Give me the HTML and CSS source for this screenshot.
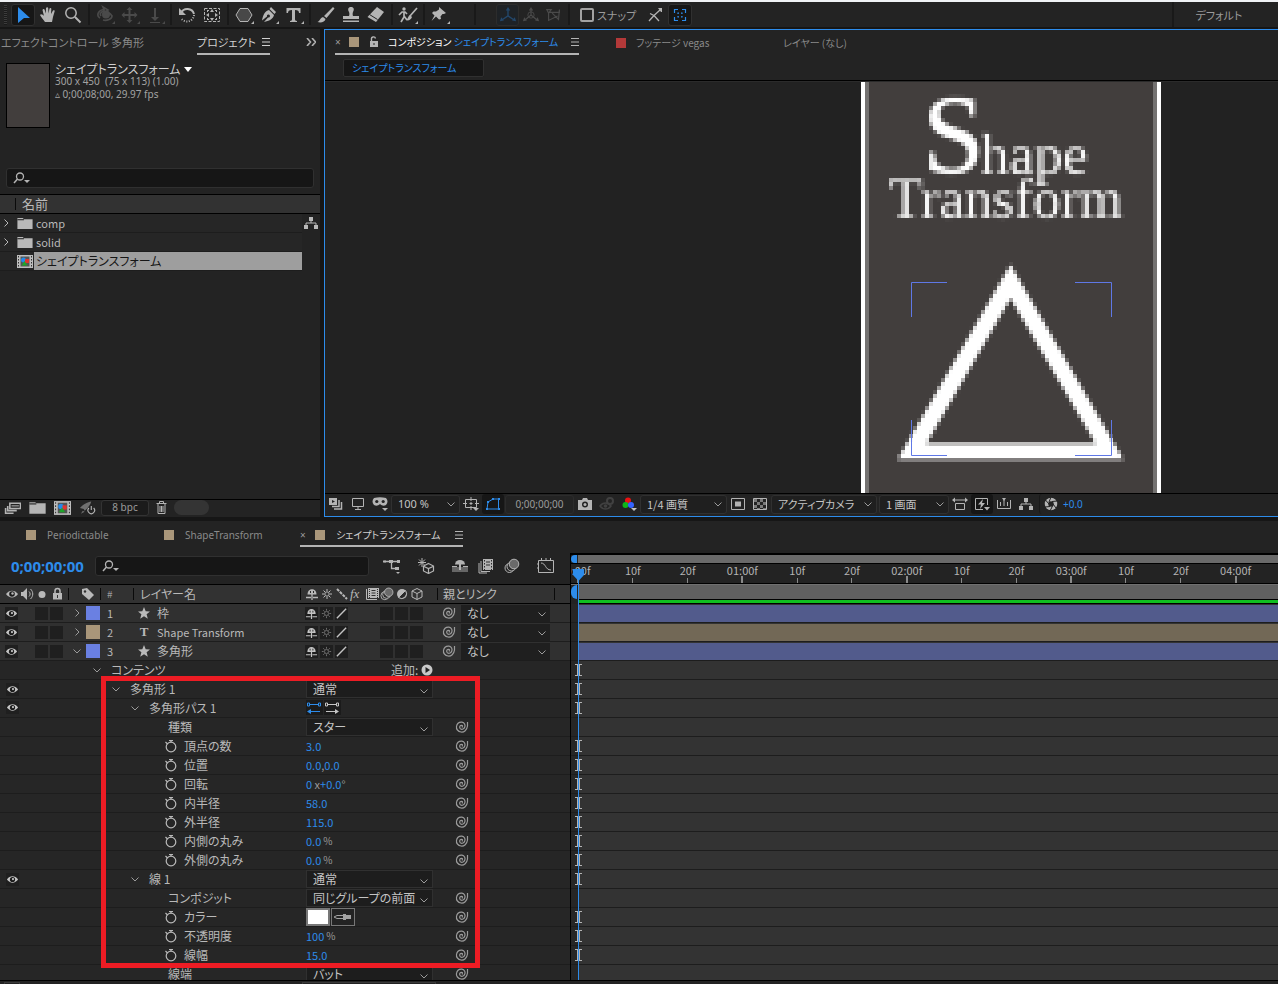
FILE: index.html
```html
<!DOCTYPE html>
<html lang="ja">
<head>
<meta charset="utf-8">
<title>シェイプトランスフォーム</title>
<link rel="stylesheet" href="styles.css">
</head>
<body>
<svg class="defs" aria-hidden="true">
  <symbol id="i-arrow" viewBox="0 0 20 20"><path d="M5 2 17 13 11 13 5 18Z" fill="#2d8ceb"/></symbol>
  <symbol id="i-hand" viewBox="0 0 20 20"><path d="M7 17C5 14 3 12 2 10 3 8.500 5 10 6 11L4.500 5C5 3.500 6.500 4 6.700 5L7.800 8.500 8 3C8.500 2 10 2 10.200 3L10.500 8.500 11.500 3.500C12.300 2.500 13.500 3 13.300 4.200L13 9 15 5.500C16 4.800 17 5.500 16.600 6.500L15 12 14 17Z" fill="currentColor"/></symbol>
  <symbol id="i-zoom" viewBox="0 0 20 20"><circle cx="8" cy="8" r="5.200" fill="none" stroke="currentColor" stroke-width="1.500"/><path d="M12 12 17.500 17.500" stroke="currentColor" stroke-width="2"/></symbol>
  <symbol id="i-orbit" viewBox="0 0 20 20"><path d="M5 13C1 11 3 5 9 4.500L8 2 13 5 9 8 9 6C5.500 7 4.500 9 6 11M8 9C10 6 15 7 17 11 17 14 12 16 8 15" fill="none" stroke="currentColor" stroke-width="1.700"/><circle cx="11" cy="9.500" r="4" fill="currentColor"/><path d="M20 16v3h-3Z" fill="currentColor"/></symbol>
  <symbol id="i-pan" viewBox="0 0 20 20"><path d="M9.500 2 12.500 5H10.500V9H14.500V7L17.500 10 14.500 13V11H10.500V15H12.500L9.500 18 6.500 15H8.500V11H4.500V13L1.500 10 4.500 7V9H8.500V5H6.500ZM20 16v3h-3Z" fill="currentColor"/></symbol>
  <symbol id="i-dolly" viewBox="0 0 20 20"><path d="M9 3h2v9h3l-4 4-4-4h3ZM5 17h10v1H5ZM20 16v3h-3Z" fill="currentColor"/></symbol>
  <symbol id="i-rotate" viewBox="0 0 20 20"><path d="M4 8A7 7 0 0 1 17 9" fill="none" stroke="currentColor" stroke-width="2"/><path d="M17 10A7 7 0 0 1 4 13" fill="none" stroke="currentColor" stroke-width="2" stroke-dasharray="1 1.500"/><path d="M2 3v7h7Z" fill="currentColor"/></symbol>
  <symbol id="i-behind" viewBox="0 0 20 20"><path d="M2.500 3.500h15v13h-15Z" fill="none" stroke="currentColor" stroke-dasharray="3 1.500"/><path d="m10 4 2 3H8Zm0 12 2-3H8ZM4 10l3-2v4Zm12 0-3-2v4ZM5 5h2v1H6v1H5Zm8 0h2v2h-1V6h-1ZM5 13h1v1h1v1H5Zm9 0h1v2h-2v-1h1Z" fill="currentColor"/></symbol>
  <symbol id="i-hex" viewBox="0 0 20 20"><path d="M6 3.500h8L18 10l-4 6.500H6L2 10Z" fill="#484848" stroke="currentColor"/><path d="M20 16v3h-3Z" fill="currentColor"/></symbol>
  <symbol id="i-pen" viewBox="0 0 20 20"><path d="M12 2 17 7 15.500 9 10.500 4ZM10 5 15 10C14 14 10 16 5 17L9 12.500A1.500 1.500 0 1 0 8 11.500L3 15.500C4 10 6 6 10 5ZM20 16v3h-3Z" fill="currentColor"/></symbol>
  <symbol id="i-type" viewBox="0 0 20 20"><path d="M2.500 3H16.500V8H15C15 6 14 5 11 5V14C11 15.500 11.500 15.800 13 16V17H6V16C7.500 15.800 8 15.500 8 14V5C5 5 4 6 4 8H2.500ZM20 16v3h-3Z" fill="currentColor"/></symbol>
  <symbol id="i-brush" viewBox="0 0 20 20"><path d="M17 2 18.500 3.500 10.500 13 8 11ZM7 12 9.500 14C9 17 5 18 1.500 17 4 16 4 13 7 12Z" fill="currentColor"/></symbol>
  <symbol id="i-stamp" viewBox="0 0 20 20"><path d="M10 2C13 2 13.500 4.500 12 7 11.500 8.500 11.500 9.500 12 11H18V14H2V11H8C8.500 9.500 8.500 8.500 8 7 6.500 4.500 7 2 10 2ZM2 15.500H18V17H2Z" fill="currentColor"/></symbol>
  <symbol id="i-eraser" viewBox="0 0 20 20"><path d="M11 2 18 7 10 17 1.500 12Z" fill="currentColor"/><path d="m3.500 9.500 8 5" stroke="#232323"/></symbol>
  <symbol id="i-roto" viewBox="0 0 20 20"><circle cx="6" cy="4" r="1.700" fill="currentColor"/><path d="M1 10 4 7H7L9 9M6 7V12L3 17M6 11 9 15M19 3 12 11" fill="none" stroke="currentColor" stroke-width="1.700"/><path d="M12 10 14 12C13 15 10 16 8 15 10 14 10 11 12 10ZM20 16v3h-3Z" fill="currentColor"/></symbol>
  <symbol id="i-pin" viewBox="0 0 20 20"><path d="M9 2 16 8 14 9 12.500 9 10.500 11.500 11 14 9 14.500 6 11.500 1.500 16 4.500 10.500 2 8 3.500 6.500H6L9 4.500ZM20 16v3h-3Z" fill="currentColor"/></symbol>
  <symbol id="i-axis" viewBox="0 0 20 20"><path d="M10 4V11L4 15M10 11 16 15" fill="none" stroke="currentColor" stroke-width="1.500"/><path d="M10 1 12.500 5h-5ZM1 17l1.500-4.500 3 3.500Zm18 0-1.500-4.500-3 3.500Z" fill="currentColor"/></symbol>
  <symbol id="i-axisw" viewBox="0 0 20 20"><circle cx="10" cy="10" r="3.500" fill="none" stroke="currentColor"/><path d="M10 4V10L4 15M10 10 16 15" fill="none" stroke="currentColor" stroke-width="1.300"/><path d="M10 1 12.500 5h-5ZM1 17l1.500-4.500 3 3.500Zm18 0-1.500-4.500-3 3.500Z" fill="currentColor"/></symbol>
  <symbol id="i-plane" viewBox="0 0 20 20"><path d="M4 7H16V4M4 7 4 16 14 11M16 4 15 15 8 8M2 4h5L4 8Z" fill="none" stroke="currentColor" stroke-width="1.300"/></symbol>
  <symbol id="i-snapline" viewBox="0 0 20 20"><path d="M3 16 8 10.500 13 16M4 8.500 8 10.500 14 5" fill="none" stroke="currentColor" stroke-width="1.300"/><path d="M12 3h4v4h-1Z" fill="currentColor"/></symbol>
  <symbol id="i-snapbox" viewBox="0 0 20 20"><path d="M4.500 8V4.500H8M12 4.500H15.500V8M15.500 12V15.500H12M8 15.500H4.500V12M8 9V8H9M11 8h1v1M12 11v1h-1M9 12H8v-1" fill="none" stroke="#2d8ceb" stroke-width="1.200"/></symbol>

  <symbol id="i-chev" viewBox="0 0 8 8"><path d="M.5 2.500 4 6 7.500 2.500" fill="none" stroke="currentColor"/></symbol>
  <symbol id="i-chevr" viewBox="0 0 8 8"><path d="M2.500.5 6 4 2.500 7.500" fill="none" stroke="currentColor"/></symbol>
  <symbol id="i-menu" viewBox="0 0 8 8"><path d="M0 .5h8M0 4h8M0 7.500h8" stroke="currentColor"/></symbol>
  <symbol id="i-search" viewBox="0 0 18 12"><circle cx="7" cy="4.500" r="3.500" fill="none" stroke="currentColor" stroke-width="1.300"/><path d="M4.500 7 1 11" stroke="currentColor" stroke-width="1.500"/><path d="M11 8h6l-3 3Z" fill="currentColor"/></symbol>
  <symbol id="i-folder" viewBox="0 0 14 12"><path d="M0 1h5l1 1h8v9H0Z" fill="currentColor"/><path d="M0 2.500h6" stroke="#262626"/></symbol>
  <symbol id="i-comp" viewBox="0 0 16 13"><path d="M0 0h16v13H0Z" fill="#bdbdbd"/><path d="M1.500 1v12M14.500 1v12" stroke="#333" stroke-dasharray="1.500 1.500"/><path d="M3.500 1.500h9v10h-9Z" fill="#555"/><circle cx="6.500" cy="5" r="2.500" fill="#2489e8"/><path d="M8 4h4v4H8Z" fill="#e0342f"/><path d="m7.500 6 3 4.500h-6Z" fill="#1fa52b"/></symbol>
  <symbol id="i-tree" viewBox="0 0 14 12"><path d="M5 0h4v4H5ZM0 8h4v4H0Zm10 0h4v4h-4Z" fill="currentColor"/><path d="M7 4v2M2 8V6h10v2" fill="none" stroke="currentColor"/></symbol>
  <symbol id="i-interp" viewBox="0 0 16 12"><path d="M5.500 1.500h10v5h-10ZM3.500 4v4.500H12M1.500 6v5H9" fill="none" stroke="currentColor" stroke-width="1.500"/><path d="M7 4h7" stroke="currentColor"/></symbol>
  <symbol id="i-rocket" viewBox="0 0 18 14"><path d="M1 7C5 2 9 1 13 0 12 4 9 7 6 10L5 8ZM4 10l-2 3 4-2Z" fill="#6f6f6f"/><path d="M10.500 7a3.500 3.500 0 1 0 5 0M13 5v4" fill="none" stroke="currentColor" stroke-width="1.200"/></symbol>
  <symbol id="i-trash" viewBox="0 0 12 14"><path d="M1 2.500h10M4 2V.5h4V2M2.500 3v9.500h7V3M4.500 5v6M6 5v6M7.500 5v6" fill="none" stroke="currentColor"/></symbol>

  <symbol id="i-preview" viewBox="0 0 16 14"><path d="M1 1h8v7H1Z" fill="currentColor"/><path d="m4 3 3 1.500L4 6Z" fill="#232323"/><path d="M11 3v6.500H4M13.500 5v7H6" fill="none" stroke="currentColor" stroke-width="1.500"/></symbol>
  <symbol id="i-monitor" viewBox="0 0 16 14"><path d="M2.500 1.500h11v8h-11ZM8 10v2M5 12.500h6" fill="none" stroke="currentColor"/></symbol>
  <symbol id="i-mask" viewBox="0 0 16 14"><path d="M2 1C6 0 10 0 14 1 16 3 16 6 14 8 12 9 10 9 8 7 6 9 4 9 2 8 0 6 0 3 2 1Z" fill="currentColor"/><circle cx="4.800" cy="4.500" r="1.600" fill="#232323"/><circle cx="11.200" cy="4.500" r="1.600" fill="#232323"/><path d="M10 11h6l-3 3Z" fill="currentColor"/></symbol>
  <symbol id="i-grid" viewBox="0 0 16 14"><path d="M2.500 2.500h11v8h-11ZM8 0v4M8 9v4M0 6.500h4M12 6.500h4M6.500 6.500h3M8 5v3" fill="none" stroke="currentColor"/><path d="M10 11h6l-3 3Z" fill="currentColor"/></symbol>
  <symbol id="i-shapemask" viewBox="0 0 16 14"><path d="M2 12 3 5 8 2H13.500V12Z" fill="none" stroke="#2d8ceb"/><path d="M1 11h2v2H1ZM2 4h2v2H2Zm5-3h2v2H7Zm6 0h2v2h-2Zm0 10h2v2h-2Z" fill="#2d8ceb"/></symbol>
  <symbol id="i-camera" viewBox="0 0 16 14"><path d="M1 3h4l1-2h4l1 2h4v10H1Z" fill="currentColor"/><circle cx="8" cy="7.500" r="3" fill="#232323"/><circle cx="8" cy="7.500" r="1.500" fill="currentColor"/></symbol>
  <symbol id="i-showsnap" viewBox="0 0 16 14"><circle cx="11" cy="4" r="3" fill="none" stroke="#414141" stroke-width="2"/><path d="M1 9C4 5 9 5 12 9 9 13 4 13 1 9Z" fill="none" stroke="#414141" stroke-width="1.500"/><circle cx="6.500" cy="9" r="1.800" fill="#414141"/></symbol>
  <symbol id="i-rgb" viewBox="0 0 16 14"><circle cx="7" cy="3.500" r="3" fill="#e11"/><circle cx="4.500" cy="8" r="3" fill="#0fb51a"/><circle cx="10" cy="8" r="3" fill="#3563ff"/><path d="M10 11h6l-3 3Z" fill="#c4c4c4"/></symbol>
  <symbol id="i-roi" viewBox="0 0 16 14"><path d="M1.500 1.500h13v11h-13Z" fill="none" stroke="currentColor"/><path d="M5 4.500h6v5H5Z" fill="currentColor"/></symbol>
  <symbol id="i-checker" viewBox="0 0 16 14"><path d="M1.500 1.500h13v11h-13Z" fill="none" stroke="currentColor"/><path d="M2 2h3v3H2Zm6 0h3v3H8ZM5 5h3v3H5Zm6 0h3v3h-3ZM2 8h3v3H2Zm6 0h3v3H8ZM5 11h3v1.500H5Zm6 0h3v1.500h-3Z" fill="currentColor" opacity=".6"/></symbol>
  <symbol id="i-par" viewBox="0 0 16 14"><path d="M1 3h14M3.500 6.500h9v6h-9Z" fill="none" stroke="currentColor"/><path d="m0 3 3-2.500v5ZM16 3l-3-2.500v5Z" fill="currentColor"/></symbol>
  <symbol id="i-fast" viewBox="0 0 16 14"><path d="M13.500 8V1.500H1.500v11H9" fill="none" stroke="currentColor"/><path d="M9 2 4 7.500h3L6 12l5-6H8ZM10 10h6l-3 3.500Z" fill="currentColor"/></symbol>
  <symbol id="i-tlbtn" viewBox="0 0 16 14"><path d="M1.500 3v8.500h13V3M4.500 5v4M8 3v6M11.500 5v4" fill="none" stroke="currentColor"/><path d="M6 1h4L8 4Z" fill="currentColor"/></symbol>
  <symbol id="i-aperture" viewBox="0 0 16 14"><circle cx="8" cy="7" r="4.500" fill="none" stroke="currentColor" stroke-width="3.500"/><path d="M8 0 6 5M14 4 9 4.500M13 11 10 7M7 14 9.500 9M2 10 7 9.500M2.500 3 6 7" stroke="#232323"/></symbol>

  <symbol id="i-flow" viewBox="0 0 18 16"><path d="M1 3.500h6M7 3.500h9M8.500 3.500v7H13" fill="none" stroke="currentColor" stroke-width="1.300"/><path d="M0 2.500h3v2H0ZM6 2h4v3H6Zm8 0h3v3h-3Zm-2 7h4v3h-4Zm1 5h4l-2 2Z" fill="currentColor"/></symbol>
  <symbol id="i-draft" viewBox="0 0 18 16"><path d="M5 0v9M1 4.500h8M2 1.500l6 6M8 1.500l-6 6" stroke="currentColor"/><path d="m11.500 5.500 5 2.500v5l-5 2.500-5-2.500V8ZM7 8.500l4.500 2 4.500-2M11.500 10.500v4.500" fill="#232323" stroke="currentColor" stroke-width="1.200"/></symbol>
  <symbol id="i-shybig" viewBox="0 0 18 16"><path d="M1 9h16v5H1Z" fill="#666"/><path d="M9 2a5 4.500 0 0 1 5 4.500H4A5 4.500 0 0 1 9 2Z" fill="currentColor"/><path d="M8 6h2v6H8ZM1 8h5v1H1Zm11 0h5v1h-5Z" fill="currentColor"/></symbol>
  <symbol id="i-frames" viewBox="0 0 18 16"><path d="M6 1h10v11H6Z" fill="currentColor"/><path d="M7.500 2v10M14.500 2v10" stroke="#2a2a2a" stroke-dasharray="1.500 1.500"/><path d="M9 4h4M9 7h4" stroke="#2a2a2a"/><path d="M4 3v10.500h9M2 5v10h8" fill="none" stroke="currentColor"/></symbol>
  <symbol id="i-blur" viewBox="0 0 18 16"><circle cx="6.500" cy="10" r="4.500" fill="none" stroke="currentColor"/><circle cx="8.500" cy="8.500" r="4.500" fill="#2b2b2b" stroke="currentColor"/><circle cx="11" cy="6" r="4.800" fill="#6a6a6a" stroke="currentColor"/></symbol>
  <symbol id="i-graph" viewBox="0 0 18 16"><path d="M1.500 2.500h15v12h-15ZM4.500 0v2M9 0v2M13.500 0v2M0 6h2M0 10h2M4 5C9 5 8 12 14 12" fill="none" stroke="currentColor"/></symbol>

  <symbol id="i-eye" viewBox="0 0 14 14"><path d="M1 7C4 2.500 10 2.500 13 7 10 11.500 4 11.500 1 7Z" fill="currentColor"/><circle cx="7" cy="7" r="2.800" fill="#1b1b1b"/><circle cx="7.500" cy="6.500" r="1.200" fill="currentColor"/></symbol>
  <symbol id="i-speaker" viewBox="0 0 14 14"><path d="M1 5h2l4-4v12L3 9H1Z" fill="currentColor"/><path d="M9 4.500c1.500 1.500 1.500 3.500 0 5M10.500 2c3 3 3 7 0 10" fill="none" stroke="currentColor"/></symbol>
  <symbol id="i-dot" viewBox="0 0 14 14"><circle cx="7" cy="7.500" r="3.500" fill="currentColor"/></symbol>
  <symbol id="i-lock" viewBox="0 0 14 14"><path d="M3 6h9v6.500H3Z" fill="currentColor"/><path d="M5 6V4a2.500 2.500 0 0 1 5 0v2" fill="none" stroke="currentColor" stroke-width="1.500"/><path d="M7 8h1v3H7Z" fill="#333"/></symbol>
  <symbol id="i-tag" viewBox="0 0 14 14"><path d="M1 2 6 1 13 8 8 13 1 7Z" fill="currentColor"/><circle cx="4" cy="4.500" r="1.200" fill="#333"/></symbol>
  <symbol id="i-shy" viewBox="0 0 14 14"><path d="M2.500 7.500C2.500 .5 11.500 .5 11.500 7.500Z" fill="currentColor"/><path d="M7 6v7M1 10.500h5M8 10.500h5" stroke="currentColor" stroke-width="1.300"/><path d="M5.500 4v2M8.500 4v2" stroke="#2a2a2a"/></symbol>
  <symbol id="i-sun" viewBox="0 0 14 14"><circle cx="7" cy="7" r="2.200" fill="none" stroke="currentColor"/><path d="M7 2v2M7 10v2M2 7h2M10 7h2M3.500 3.500 5 5M9 9l1.500 1.500M10.500 3.500 9 5M5 9l-1.500 1.500" stroke="currentColor"/></symbol>
  <symbol id="i-quality" viewBox="0 0 14 14"><path d="m2 2 10 10" stroke="currentColor" stroke-width="2" stroke-dasharray="3 1"/></symbol>
  <symbol id="i-slash" viewBox="0 0 14 14"><path d="M2 12 12 2" stroke="currentColor" stroke-width="1.500"/></symbol>
  <symbol id="i-film" viewBox="0 0 14 14"><path d="M3 1h11v10H3Z" fill="currentColor"/><path d="M6.500 3.500h4M6.500 6h4M6.500 8.500h4" stroke="#333"/><path d="M4.500 2v9M12.500 2v9" stroke="#333" stroke-dasharray="1 1"/><path d="M1.500 2v10.500H12" fill="none" stroke="currentColor"/></symbol>
  <symbol id="i-adj" viewBox="0 0 14 14"><circle cx="7" cy="7" r="5" fill="currentColor"/><path d="M10.500 3.500A5 5 0 0 1 3.500 10.500Z" fill="#2a2a2a" stroke="currentColor"/></symbol>
  <symbol id="i-cube" viewBox="0 0 14 14"><path d="m7 1.500 5 2.500v6l-5 2.500-5-2.500V4ZM2 4l5 2.500L12 4M7 6.500v6" fill="none" stroke="currentColor"/></symbol>
  <symbol id="i-star" viewBox="0 0 14 14"><path d="m7 1 1.700 4.200 4.300.3-3.400 2.800 1.200 4.500L7 10.200l-3.800 2.600 1.200-4.500L1 5.500l4.300-.3Z" fill="currentColor"/></symbol>
  <symbol id="i-whip" viewBox="0 0 14 14"><path d="M12.500 2V6C12 10 9 12.500 6 12 3 11.500 1 9 1.500 6.500 2 3.500 4.500 2 7 2.200 9.500 2.500 10.500 5 9.800 7 9 9.500 6 10 5 8.300 4 6.500 5.500 4.700 7.300 5.500V7.500" fill="none" stroke="currentColor" stroke-width="1.200"/></symbol>
  <symbol id="i-watch" viewBox="0 0 14 14"><circle cx="7" cy="8" r="4.800" fill="none" stroke="currentColor" stroke-width="1.200"/><path d="M5 1.500h4M7 1v2.500M1.500 3l2 2" stroke="currentColor" stroke-width="1.200"/></symbol>
  <symbol id="i-play" viewBox="0 0 12 12"><circle cx="6" cy="6" r="5.500" fill="#c8c8c8"/><path d="m4.500 3 4.500 3-4.500 3Z" fill="#222"/></symbol>
  <symbol id="i-dirl" viewBox="0 0 16 14"><path d="M2 3.500h12M3 10.500h11" stroke="currentColor"/><path d="M1.500 2h2v3h-2ZM12.500 2h2v3h-2Z" fill="#1b1b1b" stroke="currentColor"/><path d="m1 10.500 4-2.500v5Z" fill="currentColor"/></symbol>
  <symbol id="i-dirr" viewBox="0 0 16 14"><path d="M2 3.500h12M2 10.500h11" stroke="currentColor"/><path d="M1.500 2h2v3h-2ZM12.500 2h2v3h-2Z" fill="#1b1b1b" stroke="currentColor"/><path d="m15 10.500-4-2.500v5Z" fill="currentColor"/></symbol>
  <symbol id="i-dropper" viewBox="0 0 22 12"><path d="M2 6 5 4.500h7v3H5Z" fill="none" stroke="currentColor"/><path d="M11 3h3v1h5v4h-5v1h-3Z" fill="currentColor"/></symbol>
  <symbol id="i-ibeam" viewBox="0 0 8 12"><path d="M0 .5h3M4 .5h3M0 11.500h3M4 11.500h3" stroke="#b4b4b4"/><path d="M2 1h3v10H2Z" fill="#b4b4b4"/></symbol>
  <symbol id="i-head" viewBox="0 0 14 14"><path d="M2 1h11v6l-5.500 6L2 7Z" fill="#2d8ceb"/></symbol>
</svg>

<header class="toolbar">
  <span class="grip"></span>
  <button class="tool on" aria-label="選択"><svg><use href="#i-arrow"/></svg></button>
  <button class="tool" aria-label="手のひら"><svg><use href="#i-hand"/></svg></button>
  <button class="tool" aria-label="ズーム"><svg><use href="#i-zoom"/></svg></button>
  <i class="tsep"></i>
  <button class="tool dim" aria-label="カメラ周回"><svg><use href="#i-orbit"/></svg></button>
  <button class="tool dim" aria-label="カメラ移動"><svg><use href="#i-pan"/></svg></button>
  <button class="tool dim" aria-label="カメラドリー"><svg><use href="#i-dolly"/></svg></button>
  <i class="tsep"></i>
  <button class="tool" aria-label="回転"><svg><use href="#i-rotate"/></svg></button>
  <button class="tool" aria-label="アンカーポイント"><svg><use href="#i-behind"/></svg></button>
  <i class="tsep"></i>
  <button class="tool" aria-label="多角形"><svg><use href="#i-hex"/></svg></button>
  <button class="tool" aria-label="ペン"><svg><use href="#i-pen"/></svg></button>
  <button class="tool" aria-label="文字"><svg><use href="#i-type"/></svg></button>
  <i class="tsep"></i>
  <button class="tool" aria-label="ブラシ"><svg><use href="#i-brush"/></svg></button>
  <button class="tool" aria-label="コピースタンプ"><svg><use href="#i-stamp"/></svg></button>
  <button class="tool" aria-label="消しゴム"><svg><use href="#i-eraser"/></svg></button>
  <i class="tsep"></i>
  <button class="tool" aria-label="ロトブラシ"><svg><use href="#i-roto"/></svg></button>
  <i class="tsep"></i>
  <button class="tool" aria-label="パペットピン"><svg><use href="#i-pin"/></svg></button>
  <i class="tsep wide"></i>
  <button class="tool axis lit" aria-label="ローカル軸"><svg><use href="#i-axis"/></svg></button>
  <button class="tool axis dim" aria-label="ワールド軸"><svg><use href="#i-axisw"/></svg></button>
  <button class="tool axis dim" aria-label="ビュー軸"><svg><use href="#i-plane"/></svg></button>
  <i class="tsep"></i>
  <label class="snap"><input type="checkbox">スナップ</label>
  <button class="tool" aria-label="エッジ"><svg><use href="#i-snapline"/></svg></button>
  <button class="tool on" aria-label="フィーチャ"><svg><use href="#i-snapbox"/></svg></button>
  <button class="workspace">デフォルト</button>
</header>

<main class="upper">
  <section class="project">
    <nav class="tabs">
      <button class="tab effects">エフェクトコントロール 多角形</button>
      <button class="tab current">プロジェクト<svg class="s8"><use href="#i-menu"/></svg></button>
      <button class="more" aria-label="その他"><svg viewBox="0 0 10 8"><path d="M1 0 4.500 4 1 8M6 0l3.500 4L6 8" fill="none" stroke="currentColor" stroke-width="1.600"/></svg></button>
    </nav>
    <div class="info">
      <div class="thumb"></div>
      <div>
        <div class="title">シェイプトランスフォーム <svg viewBox="0 0 8 6"><path d="M0 1h8L4 6Z" fill="#fff"/></svg></div>
        <div class="meta">300 x 450 &nbsp;(75 x 113) (1.00)</div>
        <div class="meta">▵ 0;00;08;00, 29.97 fps</div>
      </div>
    </div>
    <label class="search"><svg><use href="#i-search"/></svg><input type="text" aria-label="プロジェクトを検索"></label>
    <div class="list-head"><i></i>名前</div>
    <div class="list">
      <div class="items">
        <div class="item latin"><svg class="s8"><use href="#i-chevr"/></svg><svg class="fi"><use href="#i-folder"/></svg><span>comp</span></div>
        <div class="item latin"><svg class="s8"><use href="#i-chevr"/></svg><svg class="fi"><use href="#i-folder"/></svg><span>solid</span></div>
        <div class="item sel"><b class="s8"></b><svg class="fi"><use href="#i-comp"/></svg><span>シェイプトランスフォーム</span></div>
      </div>
      <button class="flowbtn" aria-label="フローチャート"><svg><use href="#i-tree"/></svg></button>
    </div>
    <footer class="pfoot">
      <button aria-label="フッテージを変換"><svg><use href="#i-interp"/></svg></button>
      <button aria-label="新規フォルダー"><svg><use href="#i-folder"/></svg></button>
      <button aria-label="新規コンポジション"><svg><use href="#i-comp"/></svg></button>
      <button aria-label="プロジェクト設定"><svg><use href="#i-rocket"/></svg></button>
      <button class="bpc">8 bpc</button>
      <button aria-label="削除"><svg><use href="#i-trash"/></svg></button>
      <span class="pill"></span>
    </footer>
  </section>

  <section class="viewer">
    <nav class="vtabs">
      <div class="vtab current"><span class="x">×</span><i class="sw tan"></i><svg class="lock" viewBox="0 0 10 12"><path d="M1 5h8v6H1Z" fill="currentColor"/><path d="M2.500 5V3.500a2 2 0 0 1 4-1" fill="none" stroke="currentColor" stroke-width="1.400"/><path d="M4.500 7h1v2h-1Z" fill="#232323"/></svg><button>コンポジション <em>シェイプトランスフォーム</em></button><svg class="s8"><use href="#i-menu"/></svg></div>
      <div class="vtab foot"><i class="sw red"></i><button>フッテージ vegas</button></div>
      <div class="vtab layer"><button>レイヤー (なし)</button></div>
    </nav>
    <div class="crumbs"><button>シェイプトランスフォーム</button></div>
    <div class="stage">
      <svg viewBox="0 0 300 411" preserveAspectRatio="xMidYMin slice">
        <defs>
          <filter id="mosaic" filterUnits="userSpaceOnUse" x="0" y="0" width="300" height="412">
            <feGaussianBlur in="SourceGraphic" stdDeviation="1" result="soft"/>
            <feFlood x="2" y="2" width="1" height="1" flood-color="#000" result="dot"/>
            <feOffset in="dot" dx="0" dy="0" x="0" y="0" width="4" height="4" result="cell"/>
            <feTile in="cell" result="dots"/>
            <feComposite in="soft" in2="dots" operator="in" result="a"/>
            <feOffset in="a" dx="1" result="a1"/><feMerge result="b"><feMergeNode in="a"/><feMergeNode in="a1"/></feMerge>
            <feOffset in="b" dx="-2" result="b1"/><feMerge result="c"><feMergeNode in="b"/><feMergeNode in="b1"/></feMerge>
            <feOffset in="c" dy="1" result="c1"/><feMerge result="d"><feMergeNode in="c"/><feMergeNode in="c1"/></feMerge>
            <feOffset in="d" dy="-2" result="d1"/><feMerge><feMergeNode in="d"/><feMergeNode in="d1"/></feMerge>
          </filter>
        </defs>
        <rect width="300" height="411" fill="#fff"/>
        <rect x="4" width="292" height="411" fill="#747271"/>
        <rect x="8" width="284" height="411" fill="#423e3d"/>
        <g filter="url(#mosaic)" fill="#fff" font-family="Liberation Serif, serif">
          <text x="62" y="91" font-size="112" stroke="#fff" stroke-width="1">S</text>
          <text x="120" y="92" font-size="57">hape</text>
          <text x="28" y="136" font-size="56">Transform</text>
          <path fill-rule="evenodd" d="M150 183 263 378H37ZM150 217 66 362H235Z"/>
        </g>
        <path d="M50.500 235V200.500H86M214 200.500H250.500V235M250.500 338V373.500H214M86 373.500H50.500V338" fill="none" stroke="#5f78e6"/>
      </svg>
    </div>
    <footer class="vfoot">
      <button class="vi" aria-label="プレビュー"><svg><use href="#i-preview"/></svg></button>
      <button class="vi" aria-label="モニター"><svg><use href="#i-monitor"/></svg></button>
      <button class="vi" aria-label="VR"><svg><use href="#i-mask"/></svg></button>
      <span class="dd w69 lat"><select aria-label="拡大率"><option>100 %</option></select><svg class="s8"><use href="#i-chev"/></svg></span>
      <button class="vi" aria-label="グリッド"><svg><use href="#i-grid"/></svg></button>
      <button class="vi on" aria-label="マスク表示"><svg><use href="#i-shapemask"/></svg></button>
      <button class="vtime">0;00;00;00</button>
      <button class="vi" aria-label="スナップショット"><svg><use href="#i-camera"/></svg></button>
      <button class="vi" aria-label="スナップショットを表示"><svg><use href="#i-showsnap"/></svg></button>
      <button class="vi" aria-label="チャンネル"><svg><use href="#i-rgb"/></svg></button>
      <span class="dd w87"><select aria-label="解像度"><option>1/4 画質</option></select><svg class="s8"><use href="#i-chev"/></svg></span>
      <button class="vi" aria-label="目標範囲"><svg><use href="#i-roi"/></svg></button>
      <button class="vi" aria-label="透明グリッド"><svg><use href="#i-checker"/></svg></button>
      <span class="dd w106"><select aria-label="3Dビュー"><option>アクティブカメラ</option></select><svg class="s8"><use href="#i-chev"/></svg></span>
      <span class="dd w70"><select aria-label="画面数"><option>1 画面</option></select><svg class="s8"><use href="#i-chev"/></svg></span>
      <button class="vi" aria-label="ピクセル縦横比"><svg><use href="#i-par"/></svg></button>
      <button class="vi on" aria-label="高速プレビュー"><svg><use href="#i-fast"/></svg></button>
      <button class="vi" aria-label="タイムライン"><svg><use href="#i-tlbtn"/></svg></button>
      <button class="vi tree" aria-label="フローチャート"><svg><use href="#i-tree"/></svg></button>
      <button class="vi edge" aria-label="露出をリセット"><svg><use href="#i-aperture"/></svg></button>
      <button class="expo">+0.0</button>
    </footer>
  </section>
</main>

<section class="timeline">
  <nav class="ttabs">
    <div class="ttab t1"><i class="sw tan"></i><button>Periodictable</button></div>
    <div class="ttab t2"><i class="sw tan"></i><button>ShapeTransform</button></div>
    <div class="ttab t3 current"><span class="x">×</span><i class="sw tan"></i><button>シェイプトランスフォーム</button><svg class="s8"><use href="#i-menu"/></svg></div>
  </nav>
  <div class="tbody">
    <div class="left">
      <div class="ttools">
        <button class="now">0;00;00;00</button>
        <label class="search"><svg><use href="#i-search"/></svg><input type="text" aria-label="レイヤーを検索"></label>
        <button class="ti g1" aria-label="ミニフローチャート"><svg><use href="#i-flow"/></svg></button>
        <button class="ti g2" aria-label="ドラフト3D"><svg><use href="#i-draft"/></svg></button>
        <button class="ti g2" aria-label="シャイ"><svg><use href="#i-shybig"/></svg></button>
        <button class="ti g3" aria-label="フレームブレンド"><svg><use href="#i-frames"/></svg></button>
        <button class="ti g3" aria-label="モーションブラー"><svg><use href="#i-blur"/></svg></button>
        <button class="ti g2" aria-label="グラフエディター"><svg><use href="#i-graph"/></svg></button>
      </div>
      <div class="cols">
        <span class="c-av"><svg><use href="#i-eye"/></svg><svg><use href="#i-speaker"/></svg><svg><use href="#i-dot"/></svg><svg><use href="#i-lock"/></svg></span>
        <span class="c-tag"><svg><use href="#i-tag"/></svg></span>
        <span class="c-num">#</span>
        <span class="c-name">レイヤー名</span>
        <span class="c-sw"><svg><use href="#i-shy"/></svg><svg><use href="#i-sun"/></svg><svg><use href="#i-quality"/></svg><span class="fx">fx</span><svg><use href="#i-film"/></svg><svg viewBox="1 1 16 14"><use href="#i-blur" width="18" height="16"/></svg><svg><use href="#i-adj"/></svg><svg><use href="#i-cube"/></svg></span>
        <span class="c-parent">親とリンク</span>
      </div>
      <div class="rows">
        <div class="row layer"><b class="box"><svg><use href="#i-eye"/></svg></b><b class="box solo"></b><b class="box"></b><svg class="tw"><use href="#i-chevr"/></svg><i class="lab blue"></i><span class="num">1</span><svg class="kind"><use href="#i-star"/></svg><span class="lname">枠</span><span class="sws"><b class="box"><svg><use href="#i-shy"/></svg></b><b class="box off"><svg><use href="#i-sun"/></svg></b><b class="box"><svg><use href="#i-slash"/></svg></b></span><span class="sws mid"><b class="box"></b><b class="box"></b><b class="box"></b></span><svg class="whip"><use href="#i-whip"/></svg><span class="dd par"><select aria-label="枠の親"><option>なし</option></select><svg class="s8"><use href="#i-chev"/></svg></span></div>
        <div class="row layer"><b class="box"><svg><use href="#i-eye"/></svg></b><b class="box solo"></b><b class="box"></b><svg class="tw"><use href="#i-chevr"/></svg><i class="lab tan"></i><span class="num">2</span><span class="kind t">T</span><span class="lname latin">Shape Transform</span><span class="sws"><b class="box"><svg><use href="#i-shy"/></svg></b><b class="box off"><svg><use href="#i-sun"/></svg></b><b class="box"><svg><use href="#i-slash"/></svg></b></span><span class="sws mid"><b class="box"></b><b class="box"></b><b class="box"></b></span><svg class="whip"><use href="#i-whip"/></svg><span class="dd par"><select aria-label="Shape Transformの親"><option>なし</option></select><svg class="s8"><use href="#i-chev"/></svg></span></div>
        <div class="row layer"><b class="box"><svg><use href="#i-eye"/></svg></b><b class="box solo"></b><b class="box"></b><svg class="tw"><use href="#i-chev"/></svg><i class="lab blue"></i><span class="num">3</span><svg class="kind"><use href="#i-star"/></svg><span class="lname">多角形</span><span class="sws"><b class="box"><svg><use href="#i-shy"/></svg></b><b class="box off"><svg><use href="#i-sun"/></svg></b><b class="box"><svg><use href="#i-slash"/></svg></b></span><span class="sws mid"><b class="box"></b><b class="box"></b><b class="box"></b></span><svg class="whip"><use href="#i-whip"/></svg><span class="dd par"><select aria-label="多角形の親"><option>なし</option></select><svg class="s8"><use href="#i-chev"/></svg></span></div>

        <div class="row prop"><span></span><span class="pn d1"><svg class="tw"><use href="#i-chev"/></svg>コンテンツ</span><span class="pv add"><button>追加: <svg><use href="#i-play"/></svg></button></span></div>
        <div class="row prop"><span class="ev"><b class="box"><svg><use href="#i-eye"/></svg></b></span><span class="pn d2"><svg class="tw"><use href="#i-chev"/></svg>多角形 1</span><span class="pv"><span class="dd"><select aria-label="多角形 1 描画モード"><option>通常</option></select><svg class="s8"><use href="#i-chev"/></svg></span></span></div>
        <div class="row prop"><span class="ev"><b class="box"><svg><use href="#i-eye"/></svg></b></span><span class="pn d3"><svg class="tw"><use href="#i-chev"/></svg>多角形パス 1</span><span class="pv"><button class="dir act" aria-label="反転オフ"><svg><use href="#i-dirl"/></svg></button><button class="dir" aria-label="反転オン"><svg><use href="#i-dirr"/></svg></button></span></div>
        <div class="row prop"><span></span><span class="pn d4">種類</span><span class="pv"><span class="dd"><select aria-label="種類"><option>スター</option></select><svg class="s8"><use href="#i-chev"/></svg></span></span><svg class="whip"><use href="#i-whip"/></svg></div>
        <div class="row prop"><span></span><span class="pn d4"><svg class="sw14"><use href="#i-watch"/></svg>頂点の数</span><span class="pv">3.0</span><svg class="whip"><use href="#i-whip"/></svg></div>
        <div class="row prop"><span></span><span class="pn d4"><svg class="sw14"><use href="#i-watch"/></svg>位置</span><span class="pv">0.0<u>,</u>0.0</span><svg class="whip"><use href="#i-whip"/></svg></div>
        <div class="row prop"><span></span><span class="pn d4"><svg class="sw14"><use href="#i-watch"/></svg>回転</span><span class="pv">0<u> x</u>+0.0<u>°</u></span><svg class="whip"><use href="#i-whip"/></svg></div>
        <div class="row prop"><span></span><span class="pn d4"><svg class="sw14"><use href="#i-watch"/></svg>内半径</span><span class="pv">58.0</span><svg class="whip"><use href="#i-whip"/></svg></div>
        <div class="row prop"><span></span><span class="pn d4"><svg class="sw14"><use href="#i-watch"/></svg>外半径</span><span class="pv">115.0</span><svg class="whip"><use href="#i-whip"/></svg></div>
        <div class="row prop"><span></span><span class="pn d4"><svg class="sw14"><use href="#i-watch"/></svg>内側の丸み</span><span class="pv">0.0<u class="pc">%</u></span><svg class="whip"><use href="#i-whip"/></svg></div>
        <div class="row prop"><span></span><span class="pn d4"><svg class="sw14"><use href="#i-watch"/></svg>外側の丸み</span><span class="pv">0.0<u class="pc">%</u></span><svg class="whip"><use href="#i-whip"/></svg></div>
        <div class="row prop"><span class="ev"><b class="box"><svg><use href="#i-eye"/></svg></b></span><span class="pn d3"><svg class="tw"><use href="#i-chev"/></svg>線 1</span><span class="pv"><span class="dd"><select aria-label="線 1 描画モード"><option>通常</option></select><svg class="s8"><use href="#i-chev"/></svg></span></span></div>
        <div class="row prop"><span></span><span class="pn d4">コンポジット</span><span class="pv"><span class="dd"><select aria-label="コンポジット"><option>同じグループの前面</option></select><svg class="s8"><use href="#i-chev"/></svg></span></span><svg class="whip"><use href="#i-whip"/></svg></div>
        <div class="row prop"><span></span><span class="pn d4"><svg class="sw14"><use href="#i-watch"/></svg>カラー</span><span class="pv"><button class="chip" aria-label="カラー"></button><button class="drop" aria-label="スポイト"><svg><use href="#i-dropper"/></svg></button></span><svg class="whip"><use href="#i-whip"/></svg></div>
        <div class="row prop"><span></span><span class="pn d4"><svg class="sw14"><use href="#i-watch"/></svg>不透明度</span><span class="pv">100<u class="pc">%</u></span><svg class="whip"><use href="#i-whip"/></svg></div>
        <div class="row prop"><span></span><span class="pn d4"><svg class="sw14"><use href="#i-watch"/></svg>線幅</span><span class="pv">15.0</span><svg class="whip"><use href="#i-whip"/></svg></div>
        <div class="row prop"><span></span><span class="pn d4">線端</span><span class="pv"><span class="dd"><select aria-label="線端"><option>バット</option></select><svg class="s8"><use href="#i-chev"/></svg></span></span><svg class="whip"><use href="#i-whip"/></svg></div>
        <div class="callout"></div>
      </div>
    </div>

    <div class="right">
      <div class="zoombar"><i></i></div>
      <div class="ruler">
        <span class="major">0:00f</span><span>10f</span><span>20f</span><span class="major">01:00f</span><span>10f</span><span>20f</span><span class="major">02:00f</span><span>10f</span><span>20f</span><span class="major">03:00f</span><span>10f</span><span>20f</span><span class="major">04:00f</span>
      </div>
      <div class="workarea"><i></i></div>
      <div class="cache"></div>
      <div class="tracks">
        <div class="tr"><i class="bar b"></i></div>
        <div class="tr"><i class="bar t"></i></div>
        <div class="tr"><i class="bar b"></i></div>
        <div class="tr"><svg><use href="#i-ibeam"/></svg></div>
        <div class="tr"><svg><use href="#i-ibeam"/></svg></div>
        <div class="tr"><svg><use href="#i-ibeam"/></svg></div>
        <div class="tr"></div>
        <div class="tr"><svg><use href="#i-ibeam"/></svg></div>
        <div class="tr"><svg><use href="#i-ibeam"/></svg></div>
        <div class="tr"><svg><use href="#i-ibeam"/></svg></div>
        <div class="tr"><svg><use href="#i-ibeam"/></svg></div>
        <div class="tr"><svg><use href="#i-ibeam"/></svg></div>
        <div class="tr"><svg><use href="#i-ibeam"/></svg></div>
        <div class="tr"><svg><use href="#i-ibeam"/></svg></div>
        <div class="tr"><svg><use href="#i-ibeam"/></svg></div>
        <div class="tr"></div>
        <div class="tr"><svg><use href="#i-ibeam"/></svg></div>
        <div class="tr"><svg><use href="#i-ibeam"/></svg></div>
        <div class="tr"><svg><use href="#i-ibeam"/></svg></div>
        <div class="tr"></div>
      </div>
      <div class="playhead"><svg><use href="#i-head"/></svg></div>
    </div>
  </div>
  <footer class="tfoot"><i class="fb"></i><i class="fm"></i></footer>
</section>
</body>
</html>
```
FILE: styles.css
```css
* { box-sizing: border-box; }
html, body { height: 100%; }
body {
  margin: 0;
  display: flex;
  flex-direction: column;
  overflow: hidden;
  background: #161616;
  border-top: 2px solid #f0f2f5;
  color: #b9b9b9;
  font: 12px/16px "Noto Sans CJK JP", sans-serif;
  font-feature-settings: "palt";
}
button, input, select {
  margin: 0;
  padding: 0;
  border: 0;
  background: none;
  color: inherit;
  font: inherit;
  font-feature-settings: inherit;
}
svg { display: block; flex: none; }
.defs { position: absolute; width: 0; height: 0; }
.s8 { width: 8px; height: 8px; flex: none; }
.sw { width: 10px; height: 10px; flex: none; }
.tan { background: #a9967a; }
.red { background: #b33939; }
.blue { background: #6a80e2; }
.latin { font-size: 11px; }

/* toolbar */
.toolbar { display: flex; align-items: center; height: 25px; flex: none; background: #232323; color: #b4b4b4; }
.grip { width: 3px; height: 20px; margin: 0 4px; background: repeating-linear-gradient(#3c3c3c 0 1px, #1a1a1a 1px 2px); }
.tool { width: 25px; height: 22px; display: grid; place-items: center; border-radius: 3px; }
.tool svg { width: 20px; height: 20px; }
.tool.on { background: #161616; border: 1px solid #303030; width: 24px; }
.tool.dim { color: #4a4a4a; }
.tool.axis { width: 23px; }
.tool.axis svg { width: 18px; height: 18px; }
.tool.lit { color: #23476b; background: #1e2226; border: 1px solid #2c2c2c; }
.tsep { width: 2px; height: 21px; margin: 0 2px 0 3px; background: #191919; }
.tsep.wide { margin: 0 20px 0 22px; }
.snap { display: flex; align-items: center; gap: 3px; width: 63px; margin: 0 0 0 8px; font-size: 11px; color: #9b9b9b; white-space: nowrap; }
.snap input { appearance: none; width: 14px; height: 14px; border: 2px solid #a2a2a2; border-radius: 2px; flex: none; }
.workspace { margin-left: auto; width: 106px; height: 25px; padding-right: 14px; border-left: 2px solid #191919; font-size: 11px; color: #9b9b9b; }

/* upper area */
.upper { display: grid; grid-template-columns: 320px 1fr; column-gap: 4px; height: 488px; flex: none; margin: 2px 0 4px; }
.project { display: flex; flex-direction: column; background: #232323; min-width: 0; }
.tabs { display: flex; align-items: flex-start; height: 26px; font-size: 11px; color: #8a8a8a; }
.tab { height: 26px; white-space: nowrap; color: inherit; }
.tab.effects { width: 197px; padding-left: 1px; text-align: left; }
.tab.current { display: flex; align-items: center; justify-content: space-between; width: 73px; padding-top: 2px; color: #d0d0d0; border-bottom: 2px solid #b4b4b4; }
.more { margin: 9px 4px 0 auto; color: #b0b0b0; }
.more svg { width: 10px; height: 8px; }
.info { display: flex; gap: 5px; padding: 8px 6px 0; height: 113px; }
.thumb { width: 44px; height: 65px; border: 1px solid #000; background: #423e3d; }
.title { display: flex; align-items: center; gap: 3px; height: 12px; color: #d0d0d0; font-size: 12px; line-height: 12px; }
.title svg { width: 8px; height: 6px; }
.meta { font: 10px/13px "Noto Sans", sans-serif; color: #a2a2a2; }
.search { display: flex; align-items: center; gap: 4px; height: 20px; padding-left: 6px; background: #161616; border: 1px solid #303030; border-radius: 3px; color: #b4b4b4; }
.search svg { width: 18px; height: 12px; }
.search input { flex: 1; min-width: 0; outline: 0; }
.project .search { margin: 0 6px 6px; }
.list-head { display: flex; align-items: center; height: 20px; padding-left: 15px; gap: 6px; background: #323232; border: solid #000; border-width: 1px 0; font-size: 13px; }
.list-head i { width: 1px; height: 12px; background: #0a0a0a; }
.list { display: flex; flex: 1; }
.items { flex: 1; }
.item { display: flex; align-items: center; height: 19px; background: #262626; border-bottom: 1px solid #1d1d1d; padding-left: 2px; color: #b9b9b9; }
.item .fi { width: 16px; height: 13px; margin: 0 1px 0 7px; }
.item span { flex: 1; padding-left: 2px; line-height: 18px; }
.item.sel span { background: #9e9e9e; color: #161616; }
.flowbtn { width: 18px; align-self: flex-start; padding-top: 3px; }
.flowbtn svg { width: 14px; height: 12px; margin: 0 2px; }
.pfoot { display: flex; align-items: center; height: 18px; padding-bottom: 2px; border-top: 1px solid #000; color: #b4b4b4; }
.pfoot button { width: 25px; display: grid; place-items: center; }
.pfoot svg { width: 17px; height: 14px; }
.pfoot .bpc { width: 48px; height: 16px; margin-left: 1px; border: 1px solid #333; border-radius: 3px; background: #1b1b1b; font: 10px/13px "Noto Sans", sans-serif; color: #9b9b9b; }
.pill { width: 35px; height: 15px; border-radius: 8px; background: #343434; }

/* viewer */
.viewer { display: flex; flex-direction: column; min-width: 0; background: #232323; border: 1px solid #2d8ceb; border-right: 0; }
.vtabs { display: flex; height: 25px; padding-left: 10px; font-size: 10px; color: #8a8a8a; }
.vtab { display: flex; align-items: center; height: 25px; white-space: nowrap; }
.vtab.current { width: 244px; padding-top: 1px; color: #fff; border-bottom: 2px solid #b4b4b4; }
.vtab em { font-style: normal; color: #2d8ceb; }
.x { font: 10px/12px "Noto Sans", sans-serif; color: #9b9b9b; width: 5px; }
.vtab .x { margin-right: 9px; }
.lock { width: 10px; height: 12px; margin: 0 9px 0 10px; color: #b4b4b4; }
.vtab .s8 { margin-left: auto; color: #b4b4b4; }
.vtab.foot { margin-left: 37px; width: 167px; }
.vtab.foot .sw { margin-right: 10px; }
.crumbs { height: 26px; padding: 4px 18px 0; border-bottom: 1px solid #000; }
.crumbs button { display: block; width: 141px; height: 18px; padding-left: 8px; text-align: left; border: 1px solid #303030; border-radius: 2px; background: #161616; color: #2d8ceb; font-size: 10px; line-height: 14px; }
.stage { flex: 1; min-height: 0; overflow: hidden; border-top: 1px solid #2b2b2b; background: #222; display: flex; padding-left: 536px; }
.stage svg { width: 300px; height: 411px; }
.vfoot { display: flex; align-items: center; height: 23px; padding-bottom: 2px; flex: none; border-top: 1px solid #000; color: #b4b4b4; background: #232323; }
.vi { width: 22px; height: 20px; display: grid; place-items: center; flex: none; border-radius: 3px; }
.vi svg { width: 16px; height: 14px; }
.vi.tree svg { height: 12px; }
.vi.on { background: #161616; }
.vi.edge { margin-left: 2px; border-left: 1px solid #191919; }
.dd { display: grid; align-items: center; color: #c4c4c4; font-size: 11px; }
.dd select { grid-area: 1 / 1; width: 100%; height: 100%; padding: 0 14px 0 6px; appearance: none; outline: 0; }
.dd .s8 { grid-area: 1 / 1; justify-self: end; margin-right: 4px; pointer-events: none; color: #9b9b9b; }
.vfoot .dd { height: 19px; border: 1px solid #303030; border-radius: 3px; background: #1f1f1f; flex: none; }
.vfoot .lat { font-family: "Noto Sans", sans-serif; }
.w69 { width: 69px; }
.w70 { width: 70px; margin-left: 2px; }
.w87 { width: 87px; }
.w106 { width: 106px; }
.vtime { width: 69px; height: 19px; margin-left: 1px; border: 1px solid #2c2c2c; border-radius: 3px; font: 10px/16px "Noto Sans", sans-serif; color: #9b9b9b; }
.expo { margin-left: 2px; font: 10px/16px "Noto Sans", sans-serif; color: #2d8ceb; }

/* timeline */
.timeline { display: flex; flex-direction: column; flex: 1; min-height: 0; background: #232323; }
.ttabs { display: flex; height: 32px; flex: none; font-size: 10px; }
.ttab { display: flex; align-items: center; height: 26px; padding-top: 1px; color: #8a8a8a; }
.ttab button { font: 10px/16px "Noto Sans", sans-serif; margin-left: 11px; }
.t1 { margin-left: 26px; width: 138px; }
.t2 { width: 136px; }
.t3 { width: 163px; padding-top: 3px; border-bottom: 2px solid #b4b4b4; color: #d0d0d0; }
.t3 button { font: inherit; }
.t3 .x { margin-right: 10px; }
.t3 .s8 { margin-left: auto; color: #b4b4b4; }
.tbody { display: grid; grid-template-columns: 571px 1fr; flex: 1; min-height: 0; }
.left { display: flex; flex-direction: column; min-height: 0; border-right: 1px solid #000; }
.ttools { display: flex; align-items: center; height: 31px; padding: 0 15px 6px 11px; color: #b4b4b4; }
.now { width: 84px; text-align: left; font: bold 15px/16px "Noto Sans", sans-serif; font-size: 15px; color: #2d8ceb; }
.ttools .search { flex: 1; }
.ti svg { width: 18px; height: 16px; }
.g1 { margin-left: 14px; }
.g2 { margin-left: 16px; }
.g3 { margin-left: 8px; }
.cols { display: flex; align-items: center; height: 20px; flex: none; background: #323232; border: solid #000; border-width: 1px 0; }
.cols > span { display: flex; align-items: center; height: 12px; border-right: 1px solid #0a0a0a; }
.cols svg { width: 14px; height: 14px; margin-right: 1px; }
.c-av { width: 69px; padding-left: 5px; }
.c-tag { width: 32px; padding-left: 12px; }
.c-num { width: 33px; padding-left: 6px; font-size: 10px; color: #9b9b9b; }
.c-name { width: 167px; padding-left: 6px; }
.c-sw { width: 137px; padding-left: 4px; }
.fx { width: 15px; font: italic 13px/12px "Liberation Serif", serif; }
.c-parent { width: 117px; padding-left: 5px; }
.rows { flex: 1; min-height: 0; overflow: hidden; position: relative; }
.row { display: flex; align-items: center; height: 19px; border-bottom: 1px solid #1d1d1d; background: #262626; white-space: nowrap; line-height: 16px; }
.row.layer { background: #303030; padding-left: 5px; }
.box { display: block; width: 13px; height: 13px; flex: none; background: #1f1f1f; margin-right: 2px; }
.box svg { width: 13px; height: 13px; color: #c4c4c4; }
.box.off svg { color: #707070; }
.solo { margin-left: 15px; }
.tw { width: 8px; height: 8px; color: #9b9b9b; }
.layer .tw { margin: 0 5px 0 8px; }
.lab { width: 14px; height: 14px; }
.num { width: 24px; margin-left: 7px; font-size: 11px; }
.kind { width: 14px; height: 14px; margin: 0 6px; }
.kind.t { font: bold 13px/14px "Liberation Serif", serif; text-align: center; }
.lname { width: 148px; }
.sws { display: flex; }
.mid { margin-left: 30px; }
.whip { width: 14px; height: 14px; color: #9b9b9b; }
.layer .whip { margin: 0 5px 0 17px; }
.par { width: 89px; height: 17px; background: #1f1f1f; }
.row .dd { font-size: 12px; }
.row .dd select { padding-bottom: 3px; }
.row.prop { display: grid; grid-template-columns: 35px 271px 149px 14px; padding-bottom: 1px; }
.ev { padding-left: 6px; }
.pn { display: flex; align-items: center; }
.pn .tw { margin-right: 10px; }
.d1 { padding-left: 58px; }
.d2 { padding-left: 77px; }
.d3 { padding-left: 96px; }
.d4 { padding-left: 133px; }
.sw14 { width: 14px; height: 14px; margin: 0 6px 0 -4px; }
.pv { display: flex; align-items: center; font-size: 11px; color: #2d8ceb; white-space: pre; }
.pv u { text-decoration: none; color: #9b9b9b; }
.pv .pc { margin-left: 2px; font-size: 10px; }
.pv .dd { width: 127px; height: 18px; background: #1d1d1d; border: 1px solid #303030; }
.add { padding-left: 85px; }
.add button { display: flex; align-items: center; color: #b9b9b9; font-size: 12px; }
.add svg { width: 12px; height: 12px; }
.dir { width: 17px; height: 15px; margin-right: 1px; background: #1b1b1b; color: #c4c4c4; }
.dir.act { color: #2d8ceb; }
.dir svg { width: 16px; height: 14px; }
.chip { width: 24px; height: 18px; background: #fff; border: 2px solid #777; margin-right: 1px; }
.drop { width: 24px; height: 18px; background: #232323; border: 1px solid #777; color: #a2a2a2; }
.drop svg { width: 22px; height: 12px; }
.callout { position: absolute; left: 101px; top: 72px; width: 379px; height: 292px; border: 5px solid #ed1c24; pointer-events: none; }

.right { display: flex; flex-direction: column; position: relative; min-width: 0; min-height: 0; overflow: hidden; }
.zoombar { height: 11px; padding-left: 7px; border: solid #000; border-width: 2px 0 1px; background: linear-gradient(90deg, transparent 7px, #6a6a6a 7px); }
.zoombar i, .workarea i { display: block; width: 6px; height: 8px; margin-left: -7px; border-radius: 6px 0 0 6px; background: #2d8ceb; }
.ruler { display: flex; height: 20px; padding-left: 7px; border-bottom: 1px solid #000; font-size: 11px; line-height: 12px; color: #b4b4b4; flex: none; }
.ruler span { width: 7.830%; flex: none; display: flex; flex-direction: column; align-items: center; justify-content: space-between; margin-left: -3.915%; margin-right: 3.915%; }
.ruler span::after { content: ""; width: 1px; height: 5px; background: #8a8a8a; }
.ruler .major::after { height: 7px; width: 2px; }
.workarea { height: 15px; padding-left: 7px; background: linear-gradient(90deg, transparent 7px, #606060 7px); border-top: 1px solid #707070; flex: none; }
.workarea i { height: 14px; }
.cache { height: 5px; border: solid #000; border-width: 1px 0; margin-left: 7px; background: #10bf20; flex: none; }
.tracks { flex: 1; min-height: 0; overflow: hidden; }
.tr { height: 19px; border-bottom: 1px solid #1d1d1d; background: linear-gradient(90deg, #262626 7px, #333 7px); display: flex; align-items: center; padding-left: 4px; }
.tr svg { width: 8px; height: 12px; }
.bar { flex: 1; height: 17px; margin-left: 3px; }
.bar.b { background: #525b8c; }
.bar.t { background: #726856; }
.playhead { position: absolute; left: 0; top: 15px; bottom: 0; width: 14px; background: linear-gradient(#2d8ceb, #2d8ceb) 7px 0 / 1px 100% no-repeat; }
.playhead svg { width: 14px; height: 14px; }
.tfoot { height: 4px; flex: none; border-top: 1px solid #000; background: #232323; display: flex; align-items: flex-end; }
.fb { width: 16px; height: 2px; margin-left: 4px; border: 1px solid #3a3a3a; border-bottom: 0; }
.fm { width: 134px; height: 2px; margin-left: 282px; border: 1px solid #3a3a3a; border-bottom: 0; }
```
